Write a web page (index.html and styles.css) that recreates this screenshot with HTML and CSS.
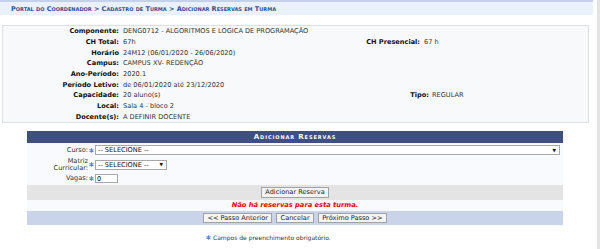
FILE: index.html
```html
<!DOCTYPE html>
<html lang="pt-BR">
<head>
    <meta charset="UTF-8">
    <title>Adicionar Reservas em Turma</title>
    <link rel="stylesheet" href="styles.css">
</head>
<body>
    <div class="page">
        <h2 class="breadcrumb">Portal do Coordenador &gt; Cadastro de Turma &gt; Adicionar Reservas em Turma</h2>

        <div class="info">
            <div class="info-grid">
                <span class="lbl">Componente:</span><span class="val wide">DENG0712 - ALGORITMOS E LOGICA DE PROGRAMAÇÃO</span>
                <span class="lbl">CH Total:</span><span class="val">67h</span><span class="lbl">CH Presencial:</span><span class="val">67 h</span>
                <span class="lbl">Horário</span><span class="val wide">24M12 (06/01/2020 - 26/06/2020)</span>
                <span class="lbl">Campus:</span><span class="val wide">CAMPUS XV- REDENÇÃO</span>
                <span class="lbl">Ano-Período:</span><span class="val wide">2020.1</span>
                <span class="lbl">Período Letivo:</span><span class="val wide">de 06/01/2020 até 23/12/2020</span>
                <span class="lbl">Capacidade:</span><span class="val">20 aluno(s)</span><span class="lbl lbl-tipo">Tipo:</span><span class="val val-tipo">REGULAR</span>
                <span class="lbl">Local:</span><span class="val wide">Sala 4 - bloco 2</span>
                <span class="lbl">Docente(s):</span><span class="val wide">A DEFINIR DOCENTE</span>
            </div>
        </div>

        <div class="form">
            <div class="form-title">Adicionar Reservas</div>

            <div class="form-row row-curso">
                <label>Curso:</label>
                <span class="required"><svg width="5" height="5" viewBox="0 0 10 10"><path d="M5 0.5V9.5M1 2.8L9 7.2M1 7.2L9 2.8" stroke="#5b86d6" stroke-width="2.2"/></svg></span>
                <div class="select select-wide"><span>-- SELECIONE --</span><span class="arrow">&#9660;</span></div>
            </div>

            <div class="form-row row-matriz">
                <label>Matriz<br>Curricular:</label>
                <span class="required"><svg width="5" height="5" viewBox="0 0 10 10"><path d="M5 0.5V9.5M1 2.8L9 7.2M1 7.2L9 2.8" stroke="#5b86d6" stroke-width="2.2"/></svg></span>
                <div class="select select-short"><span>-- SELECIONE --</span><span class="arrow">&#9660;</span></div>
            </div>

            <div class="form-row row-vagas">
                <label>Vagas:</label>
                <span class="required"><svg width="5" height="5" viewBox="0 0 10 10"><path d="M5 0.5V9.5M1 2.8L9 7.2M1 7.2L9 2.8" stroke="#5b86d6" stroke-width="2.2"/></svg></span>
                <input class="text-input" type="text" value="0">
            </div>

            <div class="sub-actions">
                <button class="btn">Adicionar Reserva</button>
            </div>

            <div class="empty-msg">Não há reservas para esta turma.</div>

            <div class="form-footer">
                <button class="btn">&lt;&lt; Passo Anterior</button>
                <button class="btn">Cancelar</button>
                <button class="btn">Próximo Passo &gt;&gt;</button>
            </div>
        </div>

        <p class="note">
            <span class="required"><svg width="5" height="5" viewBox="0 0 10 10"><path d="M5 0.5V9.5M1 2.8L9 7.2M1 7.2L9 2.8" stroke="#5b86d6" stroke-width="2.2"/></svg></span>
            Campos de preenchimento obrigatório.
        </p>
    </div>
</body>
</html>
```

FILE: styles.css
```css
* {
    margin: 0;
    padding: 0;
    box-sizing: border-box;
}

body {
    font-family: "DejaVu Sans", Verdana, sans-serif;
    font-size: 6.6px;
    color: #222;
    background: #fff;
}

.page {
    width: 600px;
    min-height: 249px;
    border-right: 3px solid #e4e4e4;
}

.breadcrumb {
    width: 593px;
    height: 15px;
    border-top: 2px solid #c3d1ec;
    background: #ebf1fb;
    padding: 1px 0 0 11px;
    font-size: 6.5px;
    font-weight: bold;
    font-variant: small-caps;
    color: #2b5096;
    line-height: 12px;
}

.info {
    width: 587px;
    margin: 10px 0 0 2px;
    background: #f8f9fb;
    border: 1px solid #dde1e6;
}

.info-grid {
    display: grid;
    grid-template-columns: 119px 238px 63px 1fr;
    grid-auto-rows: 10.7px;
    align-items: center;
    white-space: nowrap;
}

.lbl {
    text-align: right;
    font-weight: bold;
    color: #111;
    padding-right: 3px;
}

.val {
    color: #333;
    padding-left: 1px;
}

.wide {
    grid-column: span 3;
}

.lbl-tipo {
    padding-right: 0;
    margin-right: -6px;
}

.val-tipo {
    padding-left: 9px;
}

.form {
    width: 536px;
    margin: 8px 0 0 27px;
    background: #f8fafd;
}

.form-title {
    height: 12px;
    background: #3f4e83;
    color: #fff;
    text-align: center;
    font-size: 7px;
    font-weight: bold;
    font-variant: small-caps;
    letter-spacing: 0.9px;
    line-height: 12px;
}

.form-row {
    display: grid;
    grid-template-columns: 61px 7px 1fr;
    align-items: center;
    color: #333;
}

.form-row label {
    text-align: right;
    line-height: 1;
}

.row-curso { height: 14px; }
.row-matriz { height: 15px; }
.row-vagas { height: 13px; }

.required {
    display: flex;
    justify-content: center;
    align-items: center;
}

.select {
    height: 10px;
    border: 1px solid #a8a8a8;
    background: #fff;
    padding: 0 2px;
    display: flex;
    justify-content: space-between;
    align-items: center;
    color: #111;
}

.select-wide { width: 465px; }
.select-short { width: 72px; }

.arrow {
    font-size: 4.5px;
    padding-right: 1px;
}

.text-input {
    width: 23px;
    height: 9.5px;
    border: 1px solid #a8a8a8;
    background: #fff;
    font-family: inherit;
    font-size: 6.6px;
    padding: 0 1px;
    color: #111;
    outline: none;
}

.sub-actions {
    height: 15px;
    background: #e4e4e4;
    display: flex;
    justify-content: center;
    align-items: center;
}

.btn {
    height: 10.5px;
    padding: 0 3.3px;
    border: 1px solid #a2a2a2;
    background: #f4f4f4;
    font-family: inherit;
    font-size: 6.6px;
    color: #222;
    line-height: 1;
}

.empty-msg {
    height: 11px;
    line-height: 11px;
    text-align: center;
    color: #ff0000;
    font-weight: bold;
    font-style: italic;
    font-size: 6.7px;
}

.form-footer {
    height: 14px;
    background: #c9d3ea;
    display: flex;
    justify-content: center;
    align-items: center;
    gap: 4px;
}

.note {
    margin-top: 9px;
    padding-left: 206px;
    display: flex;
    align-items: center;
    gap: 2px;
    font-size: 6px;
    color: #333;
}
```
